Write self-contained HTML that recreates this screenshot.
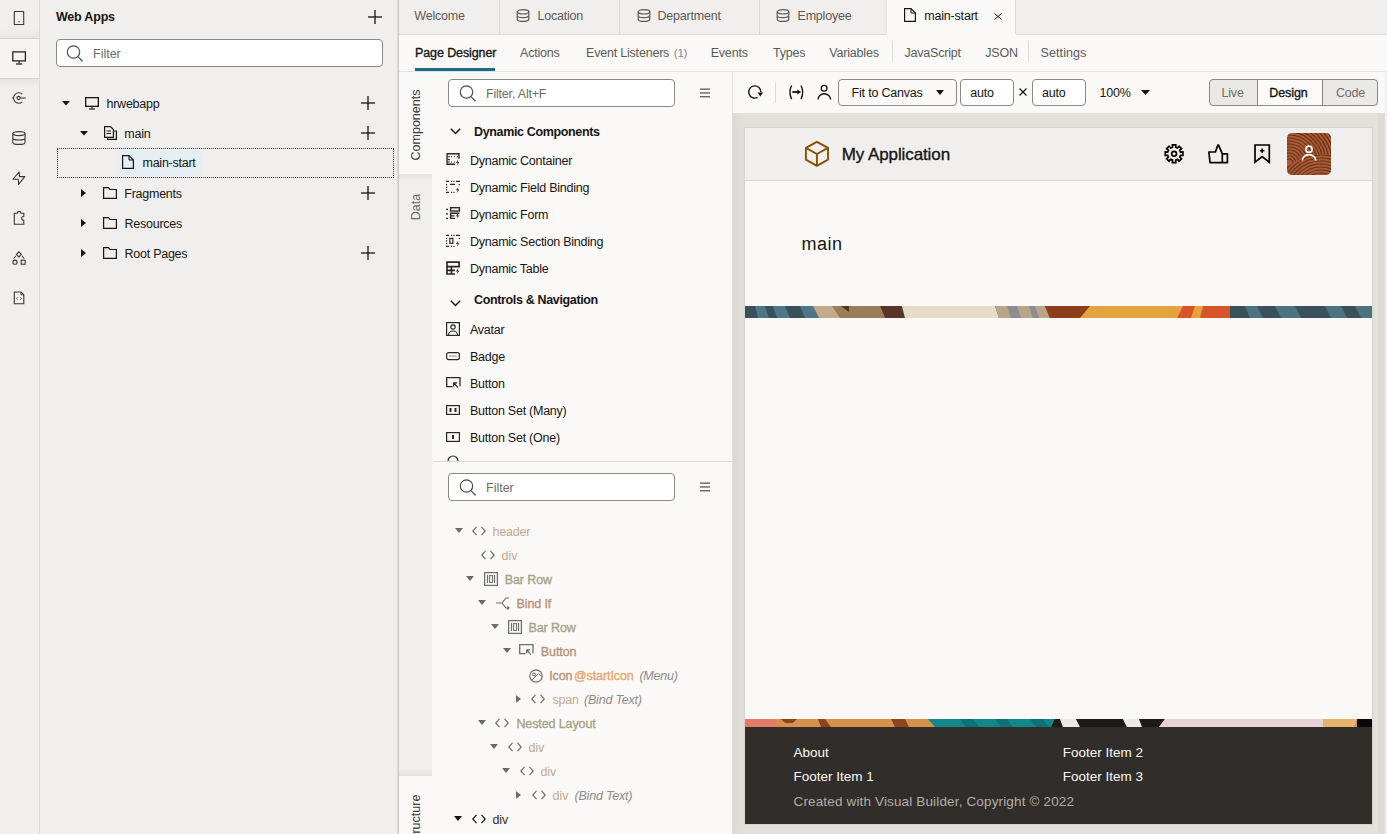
<!DOCTYPE html><html><head><meta charset="utf-8"><style>
*{margin:0;padding:0;box-sizing:border-box}
html,body{width:1387px;height:834px;overflow:hidden;background:#f1efed;font-family:"Liberation Sans", sans-serif}
.t{position:absolute;white-space:nowrap;line-height:20px;font-family:"Liberation Sans", sans-serif}
svg{overflow:visible} svg.clip{overflow:hidden}
</style></head><body><div style="position:absolute;left:0px;top:0px;width:1387px;height:834px;background:#f1efed"></div>
<div style="position:absolute;left:39px;top:0px;width:1px;height:834px;background:#dbdad8"></div>
<div style="position:absolute;left:0px;top:39px;width:39px;height:39px;background:#f5f4f2;box-shadow:0 -1px 0 #e2dfdb, 0 1px 0 #e2dfdb"></div>
<div style="position:absolute;left:0px;top:30px;width:39px;height:9px;background:linear-gradient(to bottom, rgba(0,0,0,0), rgba(0,0,0,0.05))"></div>
<div style="position:absolute;left:0px;top:78px;width:39px;height:9px;background:linear-gradient(to top, rgba(0,0,0,0), rgba(0,0,0,0.05))"></div>
<div style="position:absolute;left:397px;top:0px;width:1px;height:834px;background:#dddcda"></div>
<div style="position:absolute;left:398px;top:0px;width:1px;height:834px;background:#c9c8c6"></div>
<div style="position:absolute;left:399px;top:34px;width:988px;height:1px;background:#dcdbd9"></div>
<div style="position:absolute;left:499px;top:0px;width:1px;height:34px;background:#dcdbd9"></div>
<div style="position:absolute;left:619px;top:0px;width:1px;height:34px;background:#dcdbd9"></div>
<div style="position:absolute;left:759px;top:0px;width:1px;height:34px;background:#dcdbd9"></div>
<div style="position:absolute;left:887px;top:0px;width:129px;height:35px;background:#fbf9f8"></div>
<div style="position:absolute;left:883px;top:0px;width:4px;height:34px;background:linear-gradient(to right, rgba(0,0,0,0), rgba(0,0,0,0.04))"></div>
<div style="position:absolute;left:1015px;top:0px;width:1px;height:34px;background:#dcdbd9"></div>
<div style="position:absolute;left:399px;top:35px;width:988px;height:36px;background:#fbf9f8"></div>
<div style="position:absolute;left:399px;top:71px;width:988px;height:1px;background:#e4e1dd"></div>
<div style="position:absolute;left:399px;top:72px;width:33px;height:762px;background:#f1efed"></div>
<div style="position:absolute;left:399px;top:72px;width:33px;height:102px;background:#fbf9f8"></div>
<div style="position:absolute;left:399px;top:174px;width:33px;height:8px;background:linear-gradient(to bottom, rgba(0,0,0,0.05), rgba(0,0,0,0))"></div>
<div style="position:absolute;left:399px;top:776px;width:33px;height:58px;background:#fbf9f8"></div>
<div style="position:absolute;left:399px;top:768px;width:33px;height:8px;background:linear-gradient(to top, rgba(0,0,0,0.05), rgba(0,0,0,0))"></div>
<div style="position:absolute;left:432px;top:72px;width:300px;height:762px;background:#fbf9f8"></div>
<div style="position:absolute;left:732px;top:72px;width:1px;height:762px;background:#e4e1dd"></div>
<div style="position:absolute;left:433px;top:461px;width:299px;height:1px;background:#dedbd7"></div>
<div style="position:absolute;left:733px;top:72px;width:654px;height:41px;background:#fbf9f8"></div>
<div style="position:absolute;left:733px;top:113px;width:654px;height:721px;background:#e4e1dd"></div>
<div style="position:absolute;left:733px;top:113px;width:12px;height:721px;background:linear-gradient(to right, rgba(0,0,0,0.04), rgba(0,0,0,0))"></div>
<div style="position:absolute;left:1378px;top:113px;width:7px;height:721px;background:#dedad6"></div>
<div style="position:absolute;left:1385px;top:72px;width:2px;height:762px;background:#f3f1ef"></div>
<div style="position:absolute;left:745px;top:128px;width:627px;height:696px;background:#fbf9f8;box-shadow:0 0 1px 1px rgba(0,0,0,0.05)"></div>
<div style="position:absolute;left:745px;top:128px;width:627px;height:52px;background:#f0efed"></div>
<div style="position:absolute;left:745px;top:180px;width:627px;height:1px;background:#dcd9d5"></div>
<svg style="position:absolute;left:0px;top:0px;" width="40" height="320" viewBox="0 0 40 320"><rect x="14.3" y="11.5" width="9.4" height="13" rx="0.3" fill="none" stroke="#3b3835" stroke-width="1.1"/><rect x="18.3" y="21.3" width="1.4" height="1" fill="#3b3835"/><rect x="12.8" y="51.9" width="12.6" height="9" fill="none" stroke="#161513" stroke-width="1.2"/><line x1="19.1" y1="60.9" x2="19.1" y2="63.6" stroke="#161513" stroke-width="1.1"/><line x1="16" y1="64" x2="22.2" y2="64" stroke="#161513" stroke-width="1.2"/><path d="M22.3 94.2 A5.2 5.2 0 1 0 22.3 101.8" fill="none" stroke="#3b3835" stroke-width="1.1"/><circle cx="18.6" cy="98" r="1.6" fill="none" stroke="#3b3835" stroke-width="1.1"/><line x1="20.2" y1="98" x2="25.8" y2="98" stroke="#3b3835" stroke-width="1.1"/><line x1="12" y1="98" x2="13.4" y2="98" stroke="#3b3835" stroke-width="1.1"/><ellipse cx="18.9" cy="133.6" rx="6.1" ry="2" fill="none" stroke="#3b3835" stroke-width="1.1"/><path d="M12.8 133.6 V142.4 A6.1 2 0 0 0 25 142.4 V133.6 M12.8 138 A6.1 2 0 0 0 25 138" fill="none" stroke="#3b3835" stroke-width="1.1"/><path d="M19.2 172 L13 179.2 H18.3 L18.6 184.4 L24.8 176.6 H19.5 Z" fill="none" stroke="#3b3835" stroke-width="1.1" stroke-linejoin="round"/><path d="M14.3 224.2 V213.2 H17.3 A1.8 1.8 0 0 1 20.9 213.2 H23.8 V216.3 A1.9 1.9 0 0 0 23.8 220.4 V224.2 Z" fill="none" stroke="#3b3835" stroke-width="1.1"/><path d="M18.9 251.8 L21.4 254.4 L18.9 257 L16.4 254.4 Z" fill="none" stroke="#3b3835" stroke-width="1.1"/><path d="M15.8 256 L13.6 258.5 M22 256 L24.2 258.5" stroke="#3b3835" stroke-width="1.1"/><circle cx="15" cy="262.2" r="2.1" fill="none" stroke="#3b3835" stroke-width="1.1"/><rect x="21.2" y="260.2" width="4" height="4" fill="none" stroke="#3b3835" stroke-width="1.1"/><path d="M14.3 292 H21 L23.8 294.8 V303.8 H14.3 Z" fill="none" stroke="#3b3835" stroke-width="1.1"/><path d="M21 292 V294.8 H23.8" fill="none" stroke="#3b3835" stroke-width="0.9"/><path d="M17.8 297.3 L16.5 298.6 L17.8 299.9 M20.3 297.3 L21.6 298.6 L20.3 299.9" fill="none" stroke="#3b3835" stroke-width="0.8"/></svg>
<div class="t" style="left:56px;top:7.00px;font-size:12.5px;color:#161513;font-weight:bold;letter-spacing:-0.2px;">Web Apps</div>
<svg style="position:absolute;left:368px;top:10px;" width="14" height="14" viewBox="0 0 14 14"><line x1="7.0" y1="0" x2="7.0" y2="14" stroke="#161513" stroke-width="1.3"/><line x1="0" y1="7.0" x2="14" y2="7.0" stroke="#161513" stroke-width="1.3"/></svg>
<div style="position:absolute;left:56px;top:39px;width:327px;height:28px;background:#fff;border:1px solid #8c8985;border-radius:4px"></div>
<svg style="position:absolute;left:66px;top:45px;" width="18" height="18" viewBox="0 0 18 18"><circle cx="7.5" cy="7" r="6.2" fill="none" stroke="#4f4c49" stroke-width="1.2"/><line x1="11.9" y1="11.6" x2="16.6" y2="16.3" stroke="#4f4c49" stroke-width="1.3"/></svg>
<div class="t" style="left:93px;top:44.00px;font-size:12.5px;color:#6f6c69;font-weight:normal;letter-spacing:0px;">Filter</div>
<svg style="position:absolute;left:62px;top:101px;" width="8" height="4.5" viewBox="0 0 8 4.5"><path d="M0 0 H8 L4.0 4.5 Z" fill="#161513"/></svg>
<svg style="position:absolute;left:85px;top:97px;" width="14" height="13" viewBox="0 0 14 13"><rect x="0.65" y="0.65" width="12.7" height="8.7" fill="none" stroke="#161513" stroke-width="1.3"/><line x1="7" y1="9.3" x2="7" y2="11.5" stroke="#161513" stroke-width="1.2"/><line x1="4" y1="12" x2="10" y2="12" stroke="#161513" stroke-width="1.2"/></svg>
<div class="t" style="left:106.5px;top:94.00px;font-size:12.5px;color:#161513;font-weight:normal;letter-spacing:-0.25px;">hrwebapp</div>
<svg style="position:absolute;left:361px;top:96px;" width="14" height="14" viewBox="0 0 14 14"><line x1="7.0" y1="0" x2="7.0" y2="14" stroke="#161513" stroke-width="1.3"/><line x1="0" y1="7.0" x2="14" y2="7.0" stroke="#161513" stroke-width="1.3"/></svg>
<svg style="position:absolute;left:80px;top:131px;" width="8" height="4.5" viewBox="0 0 8 4.5"><path d="M0 0 H8 L4.0 4.5 Z" fill="#161513"/></svg>
<svg style="position:absolute;left:104px;top:126px;" width="13" height="14" viewBox="0 0 13 14"><path d="M0.6 0.6 H6.5 L9.4 3.5 V11.4 H0.6 Z" fill="none" stroke="#161513" stroke-width="1.2"/><path d="M9.4 5 L12.4 5 V13.4 H3.5 V11.4" fill="none" stroke="#161513" stroke-width="1.2"/><line x1="2.5" y1="5" x2="7" y2="5" stroke="#161513" stroke-width="1"/><line x1="2.5" y1="7.5" x2="7" y2="7.5" stroke="#161513" stroke-width="1"/></svg>
<div class="t" style="left:124.3px;top:124.00px;font-size:12.5px;color:#161513;font-weight:normal;letter-spacing:-0.25px;">main</div>
<svg style="position:absolute;left:361px;top:126px;" width="14" height="14" viewBox="0 0 14 14"><line x1="7.0" y1="0" x2="7.0" y2="14" stroke="#161513" stroke-width="1.3"/><line x1="0" y1="7.0" x2="14" y2="7.0" stroke="#161513" stroke-width="1.3"/></svg>
<div style="position:absolute;left:57px;top:148px;width:337px;height:30px;border:1px dotted #3a3a3a"></div>
<div style="position:absolute;left:117px;top:150px;width:85px;height:26px;background:#e4eef3"></div>
<svg style="position:absolute;left:122px;top:155px;" width="12" height="14" viewBox="0 0 12 14"><path d="M0.6 0.6 H7 L11.4 5 V13.4 H0.6 Z" fill="none" stroke="#161513" stroke-width="1.2"/><path d="M7 0.6 V5 H11.4" fill="none" stroke="#161513" stroke-width="1"/></svg>
<div class="t" style="left:142.5px;top:153.00px;font-size:12.5px;color:#161513;font-weight:normal;letter-spacing:-0.25px;">main-start</div>
<svg style="position:absolute;left:81px;top:189px;" width="5" height="8" viewBox="0 0 5 8"><path d="M0 0 V8 L5 4.0 Z" fill="#161513"/></svg>
<svg style="position:absolute;left:103px;top:187px;" width="14" height="12" viewBox="0 0 14 12"><path d="M0.6 0.6 H5.5 L7 2.5 H13.4 V11.4 H0.6 Z" fill="none" stroke="#161513" stroke-width="1.2"/></svg>
<div class="t" style="left:124.3px;top:184.00px;font-size:12.5px;color:#161513;font-weight:normal;letter-spacing:-0.25px;">Fragments</div>
<svg style="position:absolute;left:361px;top:186px;" width="14" height="14" viewBox="0 0 14 14"><line x1="7.0" y1="0" x2="7.0" y2="14" stroke="#161513" stroke-width="1.3"/><line x1="0" y1="7.0" x2="14" y2="7.0" stroke="#161513" stroke-width="1.3"/></svg>
<svg style="position:absolute;left:81px;top:219px;" width="5" height="8" viewBox="0 0 5 8"><path d="M0 0 V8 L5 4.0 Z" fill="#161513"/></svg>
<svg style="position:absolute;left:103px;top:217px;" width="14" height="12" viewBox="0 0 14 12"><path d="M0.6 0.6 H5.5 L7 2.5 H13.4 V11.4 H0.6 Z" fill="none" stroke="#161513" stroke-width="1.2"/></svg>
<div class="t" style="left:124.5px;top:214.00px;font-size:12.5px;color:#161513;font-weight:normal;letter-spacing:-0.25px;">Resources</div>
<svg style="position:absolute;left:81px;top:249px;" width="5" height="8" viewBox="0 0 5 8"><path d="M0 0 V8 L5 4.0 Z" fill="#161513"/></svg>
<svg style="position:absolute;left:103px;top:247px;" width="14" height="12" viewBox="0 0 14 12"><path d="M0.6 0.6 H5.5 L7 2.5 H13.4 V11.4 H0.6 Z" fill="none" stroke="#161513" stroke-width="1.2"/></svg>
<div class="t" style="left:124.5px;top:244.00px;font-size:12.5px;color:#161513;font-weight:normal;letter-spacing:-0.25px;">Root Pages</div>
<svg style="position:absolute;left:361px;top:246px;" width="14" height="14" viewBox="0 0 14 14"><line x1="7.0" y1="0" x2="7.0" y2="14" stroke="#161513" stroke-width="1.3"/><line x1="0" y1="7.0" x2="14" y2="7.0" stroke="#161513" stroke-width="1.3"/></svg>
<div class="t" style="left:414.3px;top:6.00px;font-size:12.5px;color:#5c5a57;font-weight:normal;letter-spacing:-0.2px;">Welcome</div>
<svg style="position:absolute;left:516px;top:8.5px;" width="14" height="13" viewBox="0 0 14 13"><ellipse cx="7" cy="2.8" rx="5.8" ry="2.2" fill="none" stroke="#5c5a57" stroke-width="1.2"/><path d="M1.2 2.8 V10.2 A5.8 2.2 0 0 0 12.8 10.2 V2.8 M1.2 6.5 A5.8 2.2 0 0 0 12.8 6.5" fill="none" stroke="#5c5a57" stroke-width="1.2"/></svg>
<div class="t" style="left:537.4px;top:6.00px;font-size:12.5px;color:#5c5a57;font-weight:normal;letter-spacing:-0.2px;">Location</div>
<svg style="position:absolute;left:636.5px;top:8.5px;" width="14" height="13" viewBox="0 0 14 13"><ellipse cx="7" cy="2.8" rx="5.8" ry="2.2" fill="none" stroke="#5c5a57" stroke-width="1.2"/><path d="M1.2 2.8 V10.2 A5.8 2.2 0 0 0 12.8 10.2 V2.8 M1.2 6.5 A5.8 2.2 0 0 0 12.8 6.5" fill="none" stroke="#5c5a57" stroke-width="1.2"/></svg>
<div class="t" style="left:657.5px;top:6.00px;font-size:12.5px;color:#5c5a57;font-weight:normal;letter-spacing:-0.2px;">Department</div>
<svg style="position:absolute;left:776px;top:8.5px;" width="14" height="13" viewBox="0 0 14 13"><ellipse cx="7" cy="2.8" rx="5.8" ry="2.2" fill="none" stroke="#5c5a57" stroke-width="1.2"/><path d="M1.2 2.8 V10.2 A5.8 2.2 0 0 0 12.8 10.2 V2.8 M1.2 6.5 A5.8 2.2 0 0 0 12.8 6.5" fill="none" stroke="#5c5a57" stroke-width="1.2"/></svg>
<div class="t" style="left:797.5px;top:6.00px;font-size:12.5px;color:#5c5a57;font-weight:normal;letter-spacing:-0.2px;">Employee</div>
<svg style="position:absolute;left:904px;top:8px;" width="12" height="14" viewBox="0 0 12 14"><path d="M0.6 0.6 H7 L11.4 5 V13.4 H0.6 Z" fill="none" stroke="#161513" stroke-width="1.2"/><path d="M7 0.6 V5 H11.4" fill="none" stroke="#161513" stroke-width="1"/></svg>
<div class="t" style="left:924.3px;top:6.00px;font-size:12.5px;color:#161513;font-weight:normal;letter-spacing:-0.2px;">main-start</div>
<svg style="position:absolute;left:994px;top:13px;" width="8" height="7" viewBox="0 0 8 7"><path d="M0.5 0.5 L7.5 6.5 M7.5 0.5 L0.5 6.5" stroke="#161513" stroke-width="1"/></svg>
<div class="t" style="left:415px;top:43.00px;font-size:12.5px;color:#161513;font-weight:normal;letter-spacing:-0.1px;-webkit-text-stroke:0.35px #161513;">Page Designer</div>
<div style="position:absolute;left:415px;top:68px;width:80px;height:3px;background:#1d6b8a"></div>
<div class="t" style="left:520px;top:43.00px;font-size:12.5px;color:#5c5a57;font-weight:normal;letter-spacing:-0.2px;">Actions</div>
<div class="t" style="left:586px;top:43.00px;font-size:12.5px;color:#5c5a57;font-weight:normal;letter-spacing:-0.2px;">Event Listeners</div>
<div class="t" style="left:673.8px;top:43.00px;font-size:11.5px;color:#8a8784;font-weight:normal;letter-spacing:-0.2px;">(1)</div>
<div class="t" style="left:710.7px;top:43.00px;font-size:12.5px;color:#5c5a57;font-weight:normal;letter-spacing:-0.2px;">Events</div>
<div class="t" style="left:773px;top:43.00px;font-size:12.5px;color:#5c5a57;font-weight:normal;letter-spacing:-0.2px;">Types</div>
<div class="t" style="left:829.3px;top:43.00px;font-size:12.5px;color:#5c5a57;font-weight:normal;letter-spacing:-0.2px;">Variables</div>
<div style="position:absolute;left:892px;top:41px;width:1px;height:21px;background:#dcdbd9"></div>
<div class="t" style="left:904.5px;top:43.00px;font-size:12.5px;color:#5c5a57;font-weight:normal;letter-spacing:-0.2px;">JavaScript</div>
<div class="t" style="left:985.3px;top:43.00px;font-size:12.5px;color:#5c5a57;font-weight:normal;letter-spacing:-0.2px;">JSON</div>
<div style="position:absolute;left:1028px;top:41px;width:1px;height:21px;background:#dcdbd9"></div>
<div class="t" style="left:1040.5px;top:43.00px;font-size:12.5px;color:#5c5a57;font-weight:normal;letter-spacing:0.1px;">Settings</div>
<div class="t" style="left:415.7px;top:124.6px;font-size:12.5px;color:#3a3836;transform:translate(-50%,-50%) rotate(-90deg);">Components</div>
<div class="t" style="left:415.7px;top:206.6px;font-size:12.5px;color:#6a6865;transform:translate(-50%,-50%) rotate(-90deg);">Data</div>
<div class="t" style="left:416.2px;top:819.7px;font-size:12.5px;color:#3a3836;transform:translate(-50%,-50%) rotate(-90deg);">Structure</div>
<div style="position:absolute;left:448px;top:79px;width:227px;height:28px;background:#fff;border:1px solid #8c8985;border-radius:4px"></div>
<svg style="position:absolute;left:459px;top:85px;" width="18" height="18" viewBox="0 0 18 18"><circle cx="7.5" cy="7" r="6.2" fill="none" stroke="#4f4c49" stroke-width="1.2"/><line x1="11.9" y1="11.6" x2="16.6" y2="16.3" stroke="#4f4c49" stroke-width="1.3"/></svg>
<div class="t" style="left:486px;top:84.00px;font-size:12.5px;color:#6f6c69;font-weight:normal;letter-spacing:-0.2px;">Filter, Alt+F</div>
<svg style="position:absolute;left:700px;top:88px;" width="10" height="10" viewBox="0 0 10 10"><rect x="0" y="0.5" width="10" height="1.3" fill="#5c5a57"/><rect x="0" y="4.3" width="10" height="1.3" fill="#5c5a57"/><rect x="0" y="8.1" width="10" height="1.3" fill="#5c5a57"/></svg>
<svg style="position:absolute;left:450px;top:128px;" width="11" height="7" viewBox="0 0 11 7"><path d="M0.8 0.8 L5.5 5.5 L10.2 0.8" fill="none" stroke="#161513" stroke-width="1.5"/></svg>
<div class="t" style="left:474px;top:122.00px;font-size:12.5px;color:#161513;font-weight:bold;letter-spacing:-0.35px;">Dynamic Components</div>
<div class="t" style="left:470px;top:151.00px;font-size:12.5px;color:#161513;font-weight:normal;letter-spacing:-0.25px;">Dynamic Container</div>
<div class="t" style="left:470px;top:178.00px;font-size:12.5px;color:#161513;font-weight:normal;letter-spacing:-0.25px;">Dynamic Field Binding</div>
<div class="t" style="left:470px;top:205.00px;font-size:12.5px;color:#161513;font-weight:normal;letter-spacing:-0.25px;">Dynamic Form</div>
<div class="t" style="left:470px;top:232.00px;font-size:12.5px;color:#161513;font-weight:normal;letter-spacing:-0.25px;">Dynamic Section Binding</div>
<div class="t" style="left:470px;top:259.00px;font-size:12.5px;color:#161513;font-weight:normal;letter-spacing:-0.25px;">Dynamic Table</div>
<svg style="position:absolute;left:450px;top:300px;" width="11" height="7" viewBox="0 0 11 7"><path d="M0.8 0.8 L5.5 5.5 L10.2 0.8" fill="none" stroke="#161513" stroke-width="1.5"/></svg>
<div class="t" style="left:474px;top:290.00px;font-size:12.5px;color:#161513;font-weight:bold;letter-spacing:-0.35px;">Controls &amp; Navigation</div>
<div class="t" style="left:470px;top:320.00px;font-size:12.5px;color:#161513;font-weight:normal;letter-spacing:-0.25px;">Avatar</div>
<div class="t" style="left:470px;top:347.00px;font-size:12.5px;color:#161513;font-weight:normal;letter-spacing:-0.25px;">Badge</div>
<div class="t" style="left:470px;top:374.00px;font-size:12.5px;color:#161513;font-weight:normal;letter-spacing:-0.25px;">Button</div>
<div class="t" style="left:470px;top:401.00px;font-size:12.5px;color:#161513;font-weight:normal;letter-spacing:-0.25px;">Button Set (Many)</div>
<div class="t" style="left:470px;top:428.00px;font-size:12.5px;color:#161513;font-weight:normal;letter-spacing:-0.25px;">Button Set (One)</div>
<svg style="position:absolute;left:440px;top:150px;" width="24" height="130" viewBox="440 150 24 130"><path d="M455 164.2 H447.1 V153.8 H459 V158.7" fill="none" stroke="#2b2927" stroke-width="1.4"/><path d="M448 156.8 H449.8 M451 156.8 H452 M454 156.8 H455 M456.5 156.8 H458 M448 159.6 H449.8 M448 162 H449.8 M451 162 H452 M454 162 H455" stroke="#2b2927" stroke-width="1.1"/><path d="M458.2 159.6 L455.9 162.79999999999998 H457.7 L456.7 165.4 L459.5 162.0 H457.7 Z" fill="#2b2927"/><path d="M446 181.3 H449 M451 181.3 H452.2 M453.4 181.3 H454.6 M456 181.3 H460" stroke="#2b2927" stroke-width="1.2"/><path d="M446.6 184 V185.2 M450 184.3 H455 M459.4 184 V185.2 M446.6 186.6 V188 M446.6 189.2 V190.4" stroke="#2b2927" stroke-width="1.2"/><path d="M446 192.3 H449 M451 192.3 H452.2 M453.4 192.3 H454.6" stroke="#2b2927" stroke-width="1.2"/><path d="M458.2 187 L455.9 190.2 H457.7 L456.7 192.8 L459.5 189.4 H457.7 Z" fill="#2b2927"/><path d="M446 209.3 H448 M446 213.8 H448 M446 218.3 H448" stroke="#2b2927" stroke-width="1.3"/><rect x="450.6" y="207.7" width="8.8" height="3.3" fill="none" stroke="#2b2927" stroke-width="1.4"/><path d="M459.4 213.3 H450.6 V218.4 H455 M450.6 215.9 H454.6" fill="none" stroke="#2b2927" stroke-width="1.4"/><path d="M458.2 213 L455.9 216.2 H457.7 L456.7 218.8 L459.5 215.4 H457.7 Z" fill="#2b2927"/><path d="M446 235.4 H449 M451 235.4 H452.2 M453.4 235.4 H454.6 M456 235.4 H460" stroke="#2b2927" stroke-width="1.2"/><path d="M446.6 238 V239 M459.4 238 V239 M446.6 240.2 V241.4 M446.6 242.8 V244" stroke="#2b2927" stroke-width="1.2"/><path d="M446 246.4 H449 M451 246.4 H452.2 M453.4 246.4 H454.6" stroke="#2b2927" stroke-width="1.2"/><rect x="449.8" y="238.4" width="3" height="4.9" fill="none" stroke="#2b2927" stroke-width="1.2"/><path d="M458.2 240.8 L455.9 244.0 H457.7 L456.7 246.60000000000002 L459.5 243.20000000000002 H457.7 Z" fill="#2b2927"/><path d="M455 274 H447 V262.1 H459.1 V266.6 H447 M447 270.3 H455 M451.4 266.6 V274" fill="none" stroke="#2b2927" stroke-width="1.7"/><path d="M458.2 268.3 L455.9 271.5 H457.7 L456.7 274.1 L459.5 270.7 H457.7 Z" fill="#2b2927"/></svg>
<svg style="position:absolute;left:446px;top:322px;" width="14" height="14" viewBox="0 0 14 14"><rect x="0.6" y="0.6" width="12.8" height="12.8" fill="none" stroke="#2b2927" stroke-width="1.2"/><circle cx="7" cy="5" r="2.2" fill="none" stroke="#2b2927" stroke-width="1.2"/><path d="M2.5 13 A4.5 4 0 0 1 11.5 13" fill="none" stroke="#2b2927" stroke-width="1.2"/></svg>
<svg style="position:absolute;left:446px;top:349px;" width="14" height="14" viewBox="0 0 14 14"><rect x="0.6" y="3.6" width="12.8" height="7" rx="2" fill="none" stroke="#2b2927" stroke-width="1.2"/><path d="M3.5 7.1 H10.5" stroke="#2b2927" stroke-width="1" stroke-dasharray="1 1"/></svg>
<svg style="position:absolute;left:446px;top:377px;" width="15" height="14" viewBox="0 0 15 14"><path d="M6.5 9.6 H0.7 V0.7 H14 V9.2" fill="none" stroke="#2b2927" stroke-width="1.3"/><path d="M7.6 5.8 L12 10.6 M7.6 5.8 V9.6 M7.6 5.8 H11.2" fill="none" stroke="#2b2927" stroke-width="1.3"/></svg>
<svg style="position:absolute;left:446px;top:403px;" width="14" height="14" viewBox="0 0 14 14"><rect x="0.6" y="2.6" width="12.8" height="8.8" fill="none" stroke="#2b2927" stroke-width="1.2"/><rect x="3.5" y="5" width="2" height="4" fill="#2b2927"/><rect x="8.5" y="5" width="2" height="4" fill="#2b2927"/></svg>
<svg style="position:absolute;left:446px;top:430px;" width="14" height="14" viewBox="0 0 14 14"><rect x="0.6" y="2.6" width="12.8" height="8.8" fill="none" stroke="#2b2927" stroke-width="1.2"/><rect x="6" y="5" width="2" height="4" fill="#2b2927"/></svg>
<svg style="position:absolute;left:447px;top:457px;" width="12" height="4" viewBox="0 0 12 4"><path d="M1 4 A5 5 0 0 1 11 4" fill="none" stroke="#2b2927" stroke-width="1.2"/></svg>
<div style="position:absolute;left:448px;top:473px;width:227px;height:28px;background:#fff;border:1px solid #8c8985;border-radius:4px"></div>
<svg style="position:absolute;left:459px;top:479px;" width="18" height="18" viewBox="0 0 18 18"><circle cx="7.5" cy="7" r="6.2" fill="none" stroke="#4f4c49" stroke-width="1.2"/><line x1="11.9" y1="11.6" x2="16.6" y2="16.3" stroke="#4f4c49" stroke-width="1.3"/></svg>
<div class="t" style="left:486px;top:478.00px;font-size:12.5px;color:#6f6c69;font-weight:normal;letter-spacing:0px;">Filter</div>
<svg style="position:absolute;left:700px;top:482px;" width="10" height="10" viewBox="0 0 10 10"><rect x="0" y="0.5" width="10" height="1.3" fill="#5c5a57"/><rect x="0" y="4.3" width="10" height="1.3" fill="#5c5a57"/><rect x="0" y="8.1" width="10" height="1.3" fill="#5c5a57"/></svg>
<svg style="position:absolute;left:455px;top:528px;" width="8" height="5" viewBox="0 0 8 5"><path d="M0 0 H8 L4.0 5 Z" fill="#6e6c69"/></svg>
<svg style="position:absolute;left:472px;top:526px;" width="14" height="10" viewBox="0 0 14 10"><path d="M4.5 0.8 L0.8 5 L4.5 9.2 M9.5 0.8 L13.2 5 L9.5 9.2" fill="none" stroke="#6e6c69" stroke-width="1.2"/></svg>
<div class="t" style="left:492.5px;top:522.00px;font-size:12.5px;color:#c4a794;font-weight:normal;letter-spacing:-0.2px;">header</div>
<svg style="position:absolute;left:481px;top:550px;" width="14" height="10" viewBox="0 0 14 10"><path d="M4.5 0.8 L0.8 5 L4.5 9.2 M9.5 0.8 L13.2 5 L9.5 9.2" fill="none" stroke="#6e6c69" stroke-width="1.2"/></svg>
<div class="t" style="left:501.5px;top:546.00px;font-size:12.5px;color:#c4a794;font-weight:normal;letter-spacing:0px;">div</div>
<svg style="position:absolute;left:466px;top:576px;" width="8" height="5" viewBox="0 0 8 5"><path d="M0 0 H8 L4.0 5 Z" fill="#6e6c69"/></svg>
<svg style="position:absolute;left:484px;top:572px;" width="14" height="14" viewBox="0 0 14 14"><rect x="0.6" y="0.6" width="12.8" height="12.8" fill="none" stroke="#6e6c69" stroke-width="1.2"/><path d="M3.5 3 V11 M10.5 3 V11" stroke="#6e6c69" stroke-width="1.2"/><rect x="5.6" y="3.6" width="2.8" height="6.8" fill="none" stroke="#6e6c69" stroke-width="1"/></svg>
<div class="t" style="left:504.7px;top:570.00px;font-size:12.5px;color:#a5a384;font-weight:normal;letter-spacing:-0.1px;-webkit-text-stroke:0.35px #a5a384;">Bar Row</div>
<svg style="position:absolute;left:478.4px;top:600px;" width="8" height="5" viewBox="0 0 8 5"><path d="M0 0 H8 L4.0 5 Z" fill="#6e6c69"/></svg>
<svg style="position:absolute;left:496px;top:597px;" width="14" height="12" viewBox="0 0 14 12"><path d="M0 6 H6 M6 6 L10 1 H13 M6 6 L10 11 H13 M11.5 9.5 L13 11 L11.5 12.5" fill="none" stroke="#6e6c69" stroke-width="1.2"/></svg>
<div class="t" style="left:516.5px;top:594.00px;font-size:12.5px;color:#b8917a;font-weight:normal;letter-spacing:-0.1px;-webkit-text-stroke:0.35px #b8917a;">Bind If</div>
<svg style="position:absolute;left:490.6px;top:624px;" width="8" height="5" viewBox="0 0 8 5"><path d="M0 0 H8 L4.0 5 Z" fill="#6e6c69"/></svg>
<svg style="position:absolute;left:508px;top:620px;" width="14" height="14" viewBox="0 0 14 14"><rect x="0.6" y="0.6" width="12.8" height="12.8" fill="none" stroke="#6e6c69" stroke-width="1.2"/><path d="M3.5 3 V11 M10.5 3 V11" stroke="#6e6c69" stroke-width="1.2"/><rect x="5.6" y="3.6" width="2.8" height="6.8" fill="none" stroke="#6e6c69" stroke-width="1"/></svg>
<div class="t" style="left:528.5px;top:618.00px;font-size:12.5px;color:#a5a384;font-weight:normal;letter-spacing:-0.1px;-webkit-text-stroke:0.35px #a5a384;">Bar Row</div>
<svg style="position:absolute;left:502.8px;top:648px;" width="8" height="5" viewBox="0 0 8 5"><path d="M0 0 H8 L4.0 5 Z" fill="#6e6c69"/></svg>
<svg style="position:absolute;left:519px;top:644px;" width="15" height="14" viewBox="0 0 15 14"><path d="M6.5 9.6 H0.7 V0.7 H14 V9.2" fill="none" stroke="#6e6c69" stroke-width="1.3"/><path d="M7.6 5.8 L12 10.6 M7.6 5.8 V9.6 M7.6 5.8 H11.2" fill="none" stroke="#6e6c69" stroke-width="1.3"/></svg>
<div class="t" style="left:540.8px;top:642.00px;font-size:12.5px;color:#b8917a;font-weight:normal;letter-spacing:-0.1px;-webkit-text-stroke:0.35px #b8917a;">Button</div>
<svg style="position:absolute;left:529px;top:669px;" width="14" height="14" viewBox="0 0 14 14"><circle cx="7" cy="7" r="6.2" fill="none" stroke="#6e6c69" stroke-width="1.2"/><circle cx="5" cy="5.5" r="1.5" fill="none" stroke="#6e6c69" stroke-width="1"/><path d="M3 11 L9.5 4.5 L12.5 7.5" fill="none" stroke="#6e6c69" stroke-width="1"/></svg>
<div class="t" style="left:549.2px;top:666.00px;font-size:12.5px;color:#b8917a;font-weight:normal;letter-spacing:-0.1px;-webkit-text-stroke:0.35px #b8917a;">Icon</div>
<div class="t" style="left:574px;top:666.00px;font-size:12.5px;color:#eba46a;font-weight:normal;letter-spacing:-0.1px;-webkit-text-stroke:0.35px #eba46a;">@startIcon</div>
<div class="t" style="left:639.4px;top:666.00px;font-size:12.5px;color:#8f8c89;font-weight:normal;letter-spacing:-0.2px;font-style:italic;">(Menu)</div>
<svg style="position:absolute;left:516px;top:695px;" width="5" height="8" viewBox="0 0 5 8"><path d="M0 0 V8 L5 4.0 Z" fill="#6e6c69"/></svg>
<svg style="position:absolute;left:531px;top:694px;" width="14" height="10" viewBox="0 0 14 10"><path d="M4.5 0.8 L0.8 5 L4.5 9.2 M9.5 0.8 L13.2 5 L9.5 9.2" fill="none" stroke="#6e6c69" stroke-width="1.2"/></svg>
<div class="t" style="left:552.5px;top:690.00px;font-size:12.5px;color:#c4a794;font-weight:normal;letter-spacing:-0.2px;">span</div>
<div class="t" style="left:584px;top:690.00px;font-size:12.5px;color:#8f8c89;font-weight:normal;letter-spacing:-0.2px;font-style:italic;">(Bind Text)</div>
<svg style="position:absolute;left:478.3px;top:720px;" width="8" height="5" viewBox="0 0 8 5"><path d="M0 0 H8 L4.0 5 Z" fill="#6e6c69"/></svg>
<svg style="position:absolute;left:495px;top:718px;" width="14" height="10" viewBox="0 0 14 10"><path d="M4.5 0.8 L0.8 5 L4.5 9.2 M9.5 0.8 L13.2 5 L9.5 9.2" fill="none" stroke="#6e6c69" stroke-width="1.2"/></svg>
<div class="t" style="left:516.4px;top:714.00px;font-size:12.5px;color:#a5a384;font-weight:normal;letter-spacing:-0.1px;-webkit-text-stroke:0.35px #a5a384;">Nested Layout</div>
<svg style="position:absolute;left:490.4px;top:744px;" width="8" height="5" viewBox="0 0 8 5"><path d="M0 0 H8 L4.0 5 Z" fill="#6e6c69"/></svg>
<svg style="position:absolute;left:508px;top:742px;" width="14" height="10" viewBox="0 0 14 10"><path d="M4.5 0.8 L0.8 5 L4.5 9.2 M9.5 0.8 L13.2 5 L9.5 9.2" fill="none" stroke="#6e6c69" stroke-width="1.2"/></svg>
<div class="t" style="left:528.4px;top:738.00px;font-size:12.5px;color:#c4a794;font-weight:normal;letter-spacing:0px;">div</div>
<svg style="position:absolute;left:502.4px;top:768px;" width="8" height="5" viewBox="0 0 8 5"><path d="M0 0 H8 L4.0 5 Z" fill="#6e6c69"/></svg>
<svg style="position:absolute;left:520px;top:766px;" width="14" height="10" viewBox="0 0 14 10"><path d="M4.5 0.8 L0.8 5 L4.5 9.2 M9.5 0.8 L13.2 5 L9.5 9.2" fill="none" stroke="#6e6c69" stroke-width="1.2"/></svg>
<div class="t" style="left:540.4px;top:762.00px;font-size:12.5px;color:#c4a794;font-weight:normal;letter-spacing:0px;">div</div>
<svg style="position:absolute;left:516px;top:791px;" width="5" height="8" viewBox="0 0 5 8"><path d="M0 0 V8 L5 4.0 Z" fill="#6e6c69"/></svg>
<svg style="position:absolute;left:532px;top:790px;" width="14" height="10" viewBox="0 0 14 10"><path d="M4.5 0.8 L0.8 5 L4.5 9.2 M9.5 0.8 L13.2 5 L9.5 9.2" fill="none" stroke="#6e6c69" stroke-width="1.2"/></svg>
<div class="t" style="left:552.5px;top:786.00px;font-size:12.5px;color:#c4a794;font-weight:normal;letter-spacing:0px;">div</div>
<div class="t" style="left:574.5px;top:786.00px;font-size:12.5px;color:#8f8c89;font-weight:normal;letter-spacing:-0.2px;font-style:italic;">(Bind Text)</div>
<svg style="position:absolute;left:454.3px;top:816px;" width="8" height="5" viewBox="0 0 8 5"><path d="M0 0 H8 L4.0 5 Z" fill="#161513"/></svg>
<svg style="position:absolute;left:472px;top:814px;" width="14" height="10" viewBox="0 0 14 10"><path d="M4.5 0.8 L0.8 5 L4.5 9.2 M9.5 0.8 L13.2 5 L9.5 9.2" fill="none" stroke="#161513" stroke-width="1.2"/></svg>
<div class="t" style="left:492.4px;top:810.00px;font-size:12.5px;color:#312d2a;font-weight:normal;letter-spacing:0px;">div</div>
<svg style="position:absolute;left:744px;top:82px;" width="22" height="20" viewBox="744 82 22 20"><path d="M757.6 97.4 A6.1 6.1 0 1 1 760.9 92.3" fill="none" stroke="#161513" stroke-width="1.4"/><path d="M757.6 92.6 L763.2 92.6 L760.2 96.4 Z" fill="#161513"/></svg>
<div style="position:absolute;left:775px;top:82px;width:1px;height:21px;background:#dedbd7"></div>
<svg style="position:absolute;left:786px;top:83px;" width="20" height="18" viewBox="786 83 20 18"><path d="M791.6 85.5 Q788.2 92.3 791.6 99.1 M801 85.5 Q804.4 92.3 801 99.1" fill="none" stroke="#161513" stroke-width="1.4"/><path d="M792.3 92 H798" stroke="#161513" stroke-width="1.8"/><path d="M797.3 89.4 L801.2 92 L797.3 94.6 Z" fill="#161513"/></svg>
<svg style="position:absolute;left:815px;top:83px;" width="18" height="18" viewBox="815 83 18 18"><circle cx="824.1" cy="88.3" r="2.9" fill="none" stroke="#161513" stroke-width="1.3"/><path d="M818 99.5 A6.1 5.6 0 0 1 830.6 99.5" fill="none" stroke="#161513" stroke-width="1.4"/></svg>
<div style="position:absolute;left:838px;top:79px;width:119px;height:27px;background:#fbf9f8;border:1px solid #8c8985;border-radius:4px"></div>
<div class="t" style="left:851.6px;top:83.00px;font-size:12.5px;color:#161513;font-weight:normal;letter-spacing:-0.2px;">Fit to Canvas</div>
<svg style="position:absolute;left:936px;top:90px;" width="8" height="5" viewBox="0 0 8 5"><path d="M0 0 H8 L4.0 5 Z" fill="#161513"/></svg>
<div style="position:absolute;left:960px;top:79px;width:54px;height:27px;background:#fff;border:1px solid #8c8985;border-radius:4px"></div>
<div class="t" style="left:970.2px;top:83.00px;font-size:12.5px;color:#161513;font-weight:normal;letter-spacing:-0.2px;">auto</div>
<svg style="position:absolute;left:1019px;top:88px;" width="8" height="8" viewBox="0 0 8 8"><path d="M0.5 0.5 L7.5 7.5 M7.5 0.5 L0.5 7.5" stroke="#161513" stroke-width="1.2"/></svg>
<div style="position:absolute;left:1032px;top:79px;width:54px;height:27px;background:#fff;border:1px solid #8c8985;border-radius:4px"></div>
<div class="t" style="left:1042px;top:83.00px;font-size:12.5px;color:#161513;font-weight:normal;letter-spacing:-0.2px;">auto</div>
<div class="t" style="left:1099.4px;top:83.00px;font-size:12.5px;color:#161513;font-weight:normal;letter-spacing:-0.2px;">100%</div>
<svg style="position:absolute;left:1141px;top:90px;" width="9" height="5" viewBox="0 0 9 5"><path d="M0 0 H9 L4.5 5 Z" fill="#161513"/></svg>
<div style="position:absolute;left:1209px;top:79px;width:169px;height:27px;background:#ebe9e6;border:1px solid #8c8985;border-radius:4px"></div>
<div style="position:absolute;left:1257px;top:80px;width:66px;height:25px;background:#fbfaf9;border-left:1px solid #8c8985;border-right:1px solid #8c8985"></div>
<div class="t" style="left:1221.5px;top:83.00px;font-size:12.5px;color:#6f6c69;font-weight:normal;letter-spacing:-0.2px;">Live</div>
<div class="t" style="left:1269.3px;top:83.00px;font-size:12.5px;color:#161513;font-weight:normal;letter-spacing:-0.1px;-webkit-text-stroke:0.35px #161513;">Design</div>
<div class="t" style="left:1336px;top:83.00px;font-size:12.5px;color:#6f6c69;font-weight:normal;letter-spacing:-0.2px;">Code</div>
<svg style="position:absolute;left:803px;top:139px;" width="28" height="30" viewBox="803 139 28 30"><path d="M816.9 141.8 L828 147.8 V159.6 L816.9 165.8 L805.9 159.6 V147.8 Z M805.9 147.8 L816.9 154 L828 147.8 M816.9 154 V165.8" fill="none" stroke="#8a4f05" stroke-width="1.9" stroke-linejoin="round"/></svg>
<div class="t" style="left:841.8px;top:145.00px;font-size:17px;color:#161513;font-weight:normal;letter-spacing:-0.1px;-webkit-text-stroke:0.35px #161513;">My Application</div>
<svg style="position:absolute;left:1160px;top:140px;" width="28" height="28" viewBox="1160 140 28 28"><path d="M1180.50 152.10 L1182.93 151.98 L1182.93 155.42 L1180.50 155.30 L1179.76 157.10 L1181.56 158.73 L1179.13 161.16 L1177.50 159.36 L1175.70 160.10 L1175.82 162.53 L1172.38 162.53 L1172.50 160.10 L1170.70 159.36 L1169.07 161.16 L1166.64 158.73 L1168.44 157.10 L1167.70 155.30 L1165.27 155.42 L1165.27 151.98 L1167.70 152.10 L1168.44 150.30 L1166.64 148.67 L1169.07 146.24 L1170.70 148.04 L1172.50 147.30 L1172.38 144.87 L1175.82 144.87 L1175.70 147.30 L1177.50 148.04 L1179.13 146.24 L1181.56 148.67 L1179.76 150.30 Z" fill="none" stroke="#000" stroke-width="1.7" stroke-linejoin="miter"/><circle cx="1174.1" cy="153.7" r="2.4" fill="none" stroke="#000" stroke-width="1.7"/></svg>
<svg style="position:absolute;left:1204px;top:140px;" width="28" height="28" viewBox="1204 140 28 28"><path d="M1210 162.6 L1208.9 152 H1215.4 L1217.8 145.2 L1218.6 145.2 L1222.3 153.9 H1227.4 V162.6 Z M1222.3 153.9 V162.6" fill="none" stroke="#000" stroke-width="1.7" stroke-linejoin="round"/></svg>
<svg style="position:absolute;left:1250px;top:140px;" width="24" height="28" viewBox="1250 140 24 28"><path d="M1255 145 H1269.3 V162.2 L1262.15 156.6 L1255 162.2 Z" fill="none" stroke="#000" stroke-width="1.7" stroke-linejoin="miter"/><path d="M1262.15 148.4 V153 M1259.9 150.7 H1264.4" stroke="#000" stroke-width="1.6"/></svg>
<svg style="position:absolute;left:1287px;top:133px" width="44" height="42" viewBox="0 0 44 42"><defs><clipPath id="ac"><rect width="44" height="42" rx="5"/></clipPath><clipPath id="bt"><path d="M0 42 V34 Q20 18 44 22 V42 Z"/></clipPath><clipPath id="tp"><path d="M0 0 H44 V22 Q20 18 0 34 Z"/></clipPath></defs><g clip-path="url(#ac)"><rect width="44" height="42" fill="#a95b36"/><g clip-path="url(#tp)"><circle cx="2" cy="30" r="4" fill="none" stroke="#6a3218" stroke-width="1.2"/><circle cx="2" cy="30" r="7" fill="none" stroke="#6a3218" stroke-width="1.2"/><circle cx="2" cy="30" r="10" fill="none" stroke="#6a3218" stroke-width="1.2"/><circle cx="2" cy="30" r="13" fill="none" stroke="#6a3218" stroke-width="1.2"/><circle cx="2" cy="30" r="16" fill="none" stroke="#6a3218" stroke-width="1.2"/><circle cx="2" cy="30" r="19" fill="none" stroke="#6a3218" stroke-width="1.2"/><circle cx="2" cy="30" r="22" fill="none" stroke="#6a3218" stroke-width="1.2"/><circle cx="2" cy="30" r="25" fill="none" stroke="#6a3218" stroke-width="1.2"/><circle cx="2" cy="30" r="28" fill="none" stroke="#6a3218" stroke-width="1.2"/><circle cx="2" cy="30" r="31" fill="none" stroke="#6a3218" stroke-width="1.2"/><circle cx="2" cy="30" r="34" fill="none" stroke="#6a3218" stroke-width="1.2"/><circle cx="2" cy="30" r="37" fill="none" stroke="#6a3218" stroke-width="1.2"/><circle cx="2" cy="30" r="40" fill="none" stroke="#6a3218" stroke-width="1.2"/><circle cx="2" cy="30" r="43" fill="none" stroke="#6a3218" stroke-width="1.2"/><circle cx="2" cy="30" r="46" fill="none" stroke="#6a3218" stroke-width="1.2"/><circle cx="2" cy="30" r="49" fill="none" stroke="#6a3218" stroke-width="1.2"/><circle cx="2" cy="30" r="52" fill="none" stroke="#6a3218" stroke-width="1.2"/><circle cx="2" cy="30" r="55" fill="none" stroke="#6a3218" stroke-width="1.2"/><circle cx="2" cy="30" r="58" fill="none" stroke="#6a3218" stroke-width="1.2"/></g><g clip-path="url(#bt)"><circle cx="34" cy="62" r="4" fill="none" stroke="#6a3218" stroke-width="1.2"/><circle cx="34" cy="62" r="7" fill="none" stroke="#6a3218" stroke-width="1.2"/><circle cx="34" cy="62" r="10" fill="none" stroke="#6a3218" stroke-width="1.2"/><circle cx="34" cy="62" r="13" fill="none" stroke="#6a3218" stroke-width="1.2"/><circle cx="34" cy="62" r="16" fill="none" stroke="#6a3218" stroke-width="1.2"/><circle cx="34" cy="62" r="19" fill="none" stroke="#6a3218" stroke-width="1.2"/><circle cx="34" cy="62" r="22" fill="none" stroke="#6a3218" stroke-width="1.2"/><circle cx="34" cy="62" r="25" fill="none" stroke="#6a3218" stroke-width="1.2"/><circle cx="34" cy="62" r="28" fill="none" stroke="#6a3218" stroke-width="1.2"/><circle cx="34" cy="62" r="31" fill="none" stroke="#6a3218" stroke-width="1.2"/><circle cx="34" cy="62" r="34" fill="none" stroke="#6a3218" stroke-width="1.2"/><circle cx="34" cy="62" r="37" fill="none" stroke="#6a3218" stroke-width="1.2"/><circle cx="34" cy="62" r="40" fill="none" stroke="#6a3218" stroke-width="1.2"/><circle cx="34" cy="62" r="43" fill="none" stroke="#6a3218" stroke-width="1.2"/><circle cx="34" cy="62" r="46" fill="none" stroke="#6a3218" stroke-width="1.2"/><circle cx="34" cy="62" r="49" fill="none" stroke="#6a3218" stroke-width="1.2"/><circle cx="34" cy="62" r="52" fill="none" stroke="#6a3218" stroke-width="1.2"/><circle cx="34" cy="62" r="55" fill="none" stroke="#6a3218" stroke-width="1.2"/><circle cx="34" cy="62" r="58" fill="none" stroke="#6a3218" stroke-width="1.2"/></g><circle cx="22" cy="16.2" r="3.1" fill="none" stroke="#fff" stroke-width="1.6"/><path d="M15.3 27.6 A6.7 6 0 0 1 28.7 27.6" fill="none" stroke="#fff" stroke-width="1.6"/></g></svg>
<div class="t" style="left:801.5px;top:234.00px;font-size:18px;color:#161513;font-weight:normal;letter-spacing:0.5px;">main</div>
<svg class="clip" style="position:absolute;left:745px;top:306px" width="627" height="12" viewBox="0 0 627 12">
<rect width="627" height="12" fill="#3b5159"/>
<path d="M10 0 H20 L24 12 H13 Z M28 0 H40 L45 12 H32 Z M55 0 H68 L74 12 H60 Z" fill="#4d7786"/>
<path d="M68 0 H150 L160 12 H74 Z" fill="#c3ab8a"/>
<path d="M87 0 H112 L118 12 H95 Z M108 0 H135 L140 12 H115 Z" fill="#9b7d57"/>
<path d="M96 0 H104 L104 6 Z" fill="#53302a"/>
<path d="M135 0 H155 L160 12 H140 Z" fill="#5a3329"/>
<path d="M157 0 H250 L254 12 H160 Z" fill="#e7ddc6"/>
<path d="M250 0 H300 L305 12 H254 Z" fill="#b9a487"/>
<path d="M262 0 H272 L276 12 H266 Z M284 0 H290 L294 12 H288 Z" fill="#8c8e92"/>
<path d="M300 0 H345 L340 12 H305 Z" fill="#8e3d1d"/>
<path d="M345 0 H485 V12 H335 Z" fill="#e3a33d"/>
<path d="M438 0 H450 L446 12 H432 Z M458 0 H485 L485 12 H455 Z" fill="#d8552b"/>
<path d="M485 0 H627 V12 H485 Z" fill="#3b5159"/>
<path d="M500 0 H512 L518 12 H505 Z M530 0 H550 L556 12 H536 Z M580 0 H596 L602 12 H586 Z M610 0 H627 V12 H616 Z" fill="#4b7380"/>
</svg>
<svg class="clip" style="position:absolute;left:745px;top:719px" width="627" height="8" viewBox="0 0 627 8">
<rect width="627" height="8" fill="#d8914b"/>
<rect x="0" y="0" width="31" height="8" fill="#e37b68"/>
<path d="M36 0 H52 L48 4 H40 Z M73 0 H80 L86 8 H76 Z M146 0 H160 L164 8 H150 Z" fill="#8a4420"/>
<path d="M183 0 H312 L306 8 H190 Z" fill="#12878a"/>
<path d="M215 0 H228 L234 8 H221 Z M250 0 H262 L268 8 H256 Z M285 0 H298 L304 8 H291 Z" fill="#0e7275"/>
<path d="M310 0 H315 L318 8 H306 Z" fill="#1f1b19"/>
<path d="M315 0 H331 L335 8 H318 Z" fill="#e9e9e8"/>
<path d="M331 0 H378 L382 8 H335 Z" fill="#1d1b19"/>
<path d="M378 0 H394 L397 8 H382 Z" fill="#ebebea"/>
<path d="M394 0 H420 L414 8 H397 Z" fill="#1d1b19"/>
<path d="M420 0 H578 V8 H414 Z" fill="#e9d2d7"/>
<path d="M578 0 H612 L609 8 H578 Z" fill="#e6b46d"/>
<rect x="612" y="0" width="15" height="8" fill="#080808"/>
</svg>
<div style="position:absolute;left:745px;top:727px;width:627px;height:97px;background:#312d2a"></div>
<div class="t" style="left:793.5px;top:743.00px;font-size:13.5px;color:#fbf9f8;font-weight:normal;letter-spacing:0px;">About</div>
<div class="t" style="left:793.5px;top:767.00px;font-size:13.5px;color:#fbf9f8;font-weight:normal;letter-spacing:0px;">Footer Item 1</div>
<div class="t" style="left:1062.8px;top:743.00px;font-size:13.5px;color:#fbf9f8;font-weight:normal;letter-spacing:0px;">Footer Item 2</div>
<div class="t" style="left:1062.8px;top:767.00px;font-size:13.5px;color:#fbf9f8;font-weight:normal;letter-spacing:0px;">Footer Item 3</div>
<div class="t" style="left:793.5px;top:792.00px;font-size:13.5px;color:#b3aea9;font-weight:normal;letter-spacing:0.15px;">Created with Visual Builder, Copyright © 2022</div></body></html>
